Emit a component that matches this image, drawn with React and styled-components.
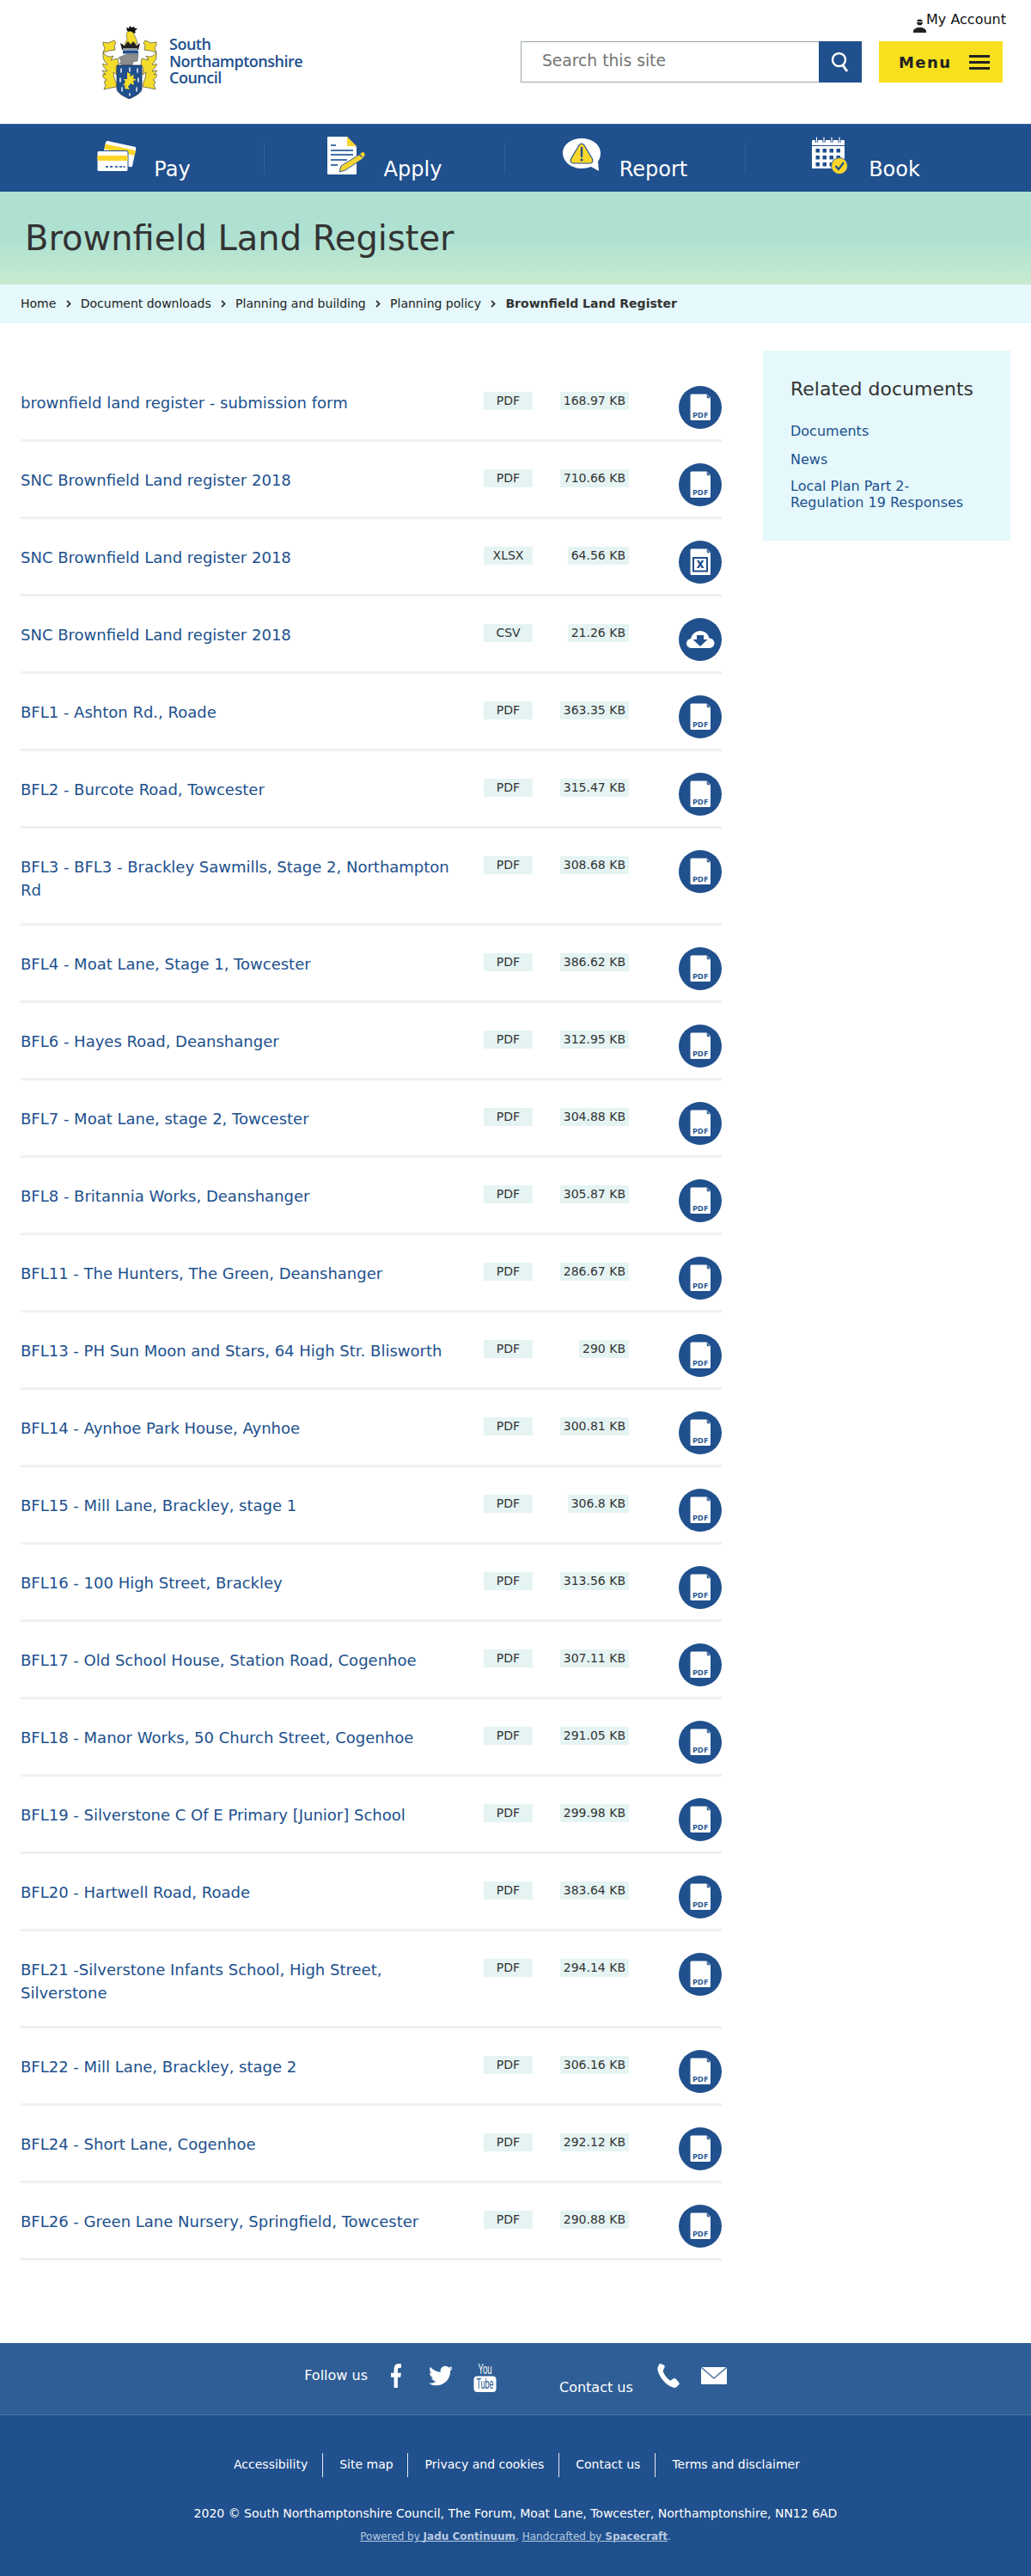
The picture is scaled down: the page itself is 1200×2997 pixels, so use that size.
import styled, { createGlobalStyle } from 'styled-components'
import { FaFacebookF, FaTwitter } from 'react-icons/fa'

const BLUE = '#20508d'

const GlobalStyle = createGlobalStyle`
  html, body {
    margin: 0;
    padding: 0;
    background: #fff;
    font-family: "DejaVu Sans", "Liberation Sans", sans-serif;
    color: #333;
  }
  * { box-sizing: border-box; }
  a { text-decoration: none; color: inherit; }
`

const Page = styled.div`
  width: 1200px;
`

const Header = styled.header`
  height: 144px;
  display: flex;
  justify-content: space-between;
  align-items: flex-start;
  padding: 12px 33px 0 119px;
`

const Logo = styled.a`
  display: flex;
  align-items: center;
  gap: 14px;
  margin-top: 18px;
`

const LogoText = styled.span`
  font-family: "Open Sans", sans-serif;
  font-weight: 600;
  font-size: 18px;
  line-height: 19.5px;
  letter-spacing: -0.5px;
  color: ${BLUE};
  margin-top: -2px;
`

const HeaderRight = styled.div`
  display: flex;
  flex-direction: column;
  align-items: flex-end;
`

const Account = styled.a`
  display: flex;
  height: 36px;
  margin-right: -4px;
  font-size: 16px;
  line-height: 22px;
  color: #111;
  svg { margin-top: 10px; }
`

const SearchRow = styled.div`
  display: flex;
  gap: 20px;
`

const SearchForm = styled.form`
  display: flex;
`

const SearchInput = styled.input`
  width: 347px;
  height: 48px;
  border: 1px solid #9aa9ae;
  border-right: none;
  padding: 0 0 4px 24px;
  font: 18.7px "DejaVu Sans", sans-serif;
  color: #333;
  background: #fff;
  border-radius: 0;
  outline: none;
  &::placeholder { color: #757575; opacity: 1; }
`

const SearchButton = styled.button`
  width: 50px;
  height: 48px;
  border: none;
  padding: 0;
  background: ${BLUE};
  display: flex;
  align-items: center;
  justify-content: center;
`

const MenuButton = styled.button`
  width: 144px;
  height: 48px;
  border: none;
  padding: 0 15px 0 23px;
  background: #f8e01e;
  display: flex;
  align-items: center;
  justify-content: space-between;
  font: bold 18px "DejaVu Sans", sans-serif;
  letter-spacing: 1.4px;
  color: #222;
`

const Burger = styled.span`
  display: flex;
  flex-direction: column;
  gap: 4px;
  width: 24px;
  i {
    display: block;
    height: 3px;
    background: #222;
  }
`

const Nav = styled.nav`
  height: 79px;
  background: ${BLUE};
  border-top: 1px solid #3a6a9f;
  padding: 21px 52px 0 28px;
  display: grid;
  grid-template-columns: repeat(4, 280px);
  align-items: start;
`

const NavItem = styled.a`
  height: 36px;
  display: flex;
  justify-content: center;
  color: #fff;
  border-right: ${p => (p.$last ? 'none' : '1px solid #33639b')};
`

const NavIcon = styled.span`
  width: 44px;
  height: 44px;
  margin: -7px 22px 0 0;
  flex: none;
`

const NavLabel = styled.span`
  margin-top: 17px;
  font-size: 24px;
  line-height: 28px;
`

const Hero = styled.div`
  height: 108px;
  padding: 32px 29px 0;
  background: linear-gradient(#aee1d2 0%, #aee1d2 50%, #c9ebcf 100%);
`

const Title = styled.h1`
  margin: 0;
  font-weight: 400;
  font-size: 40px;
  line-height: 44px;
  color: #333;
`

const Crumbs = styled.div`
  height: 45px;
  padding: 0 24px 1px;
  background: #e5f8fb;
  display: flex;
  align-items: center;
  gap: 11.2px;
  font-size: 14px;
  color: #222;
`

const CrumbCurrent = styled.strong`
  font-weight: 700;
  color: #333;
`

const Main = styled.main`
  display: flex;
  align-items: flex-start;
  gap: 48px;
  padding: 0 24px 96px;
`

const List = styled.div`
  width: 816px;
  margin-top: 48px;
`

const Row = styled.div`
  display: grid;
  grid-template-columns: 539px 57px 112px 58px 50px;
  align-items: start;
  border-bottom: 3px solid #f0f0f0;
`

const RowTitle = styled.a`
  padding: 31px 29px 25px 0;
  font-size: 18px;
  line-height: 27px;
  color: ${BLUE};
`

const Badge = styled.span`
  height: 21px;
  margin-top: 32px;
  line-height: 21px;
  font-size: 14px;
  background: #e5f4f3;
  color: #333;
  white-space: nowrap;
`

const TypeBadge = styled(Badge)`
  text-align: center;
`

const SizeBadge = styled(Badge)`
  justify-self: end;
  padding: 0 4px;
`

const RowIcon = styled.a`
  grid-column: 5;
  margin: 25px 0 12px;
  width: 50px;
  height: 50px;
  display: block;
  svg { display: block; }
`

const Related = styled.aside`
  width: 288px;
  margin-top: 32px;
  padding: 32px 32px 35px;
  background: #e5f8fb;
`

const RelatedHeading = styled.h2`
  margin: 0 0 26px;
  font-weight: 400;
  font-size: 22px;
  line-height: 26px;
  color: #333;
`

const RelatedList = styled.ul`
  margin: 0;
  padding: 0;
  list-style: none;
  display: flex;
  flex-direction: column;
  gap: 14px;
  font-size: 16px;
  line-height: 19px;
  color: ${BLUE};
  li:last-child { margin-top: -2px; }
`

const Footer = styled.footer`
  background: ${BLUE};
  color: #fff;
`

const Social = styled.div`
  height: 84px;
  background: #2f5e96;
  border-bottom: 1px solid #4a75a7;
  padding-bottom: 8px;
  display: flex;
  justify-content: center;
  align-items: center;
  font-size: 16px;
`

const SocialLabel = styled.span`
  line-height: 20px;
  padding-top: ${p => p.$drop || 0}px;
  margin-right: ${p => p.$right || 0}px;
`

const SocialIcon = styled.a`
  display: flex;
  margin-right: ${p => p.$right || 0}px;
  color: #fff;
`

const FacebookGlyph = styled(FaFacebookF)`
  width: 14px;
  height: 28px;
`

const FooterLinks = styled.ul`
  margin: 0;
  padding: 44px 0 0;
  list-style: none;
  display: flex;
  justify-content: center;
  font-size: 14px;
`

const FooterLink = styled.li`
  height: 28px;
  line-height: 27px;
  padding: 0 16.500px 0 19.500px;
  border-right: ${p => (p.$last ? 'none' : '1px solid #e4ebf3')};
`

const Copyright = styled.p`
  margin: 32px 0 0;
  font-size: 14px;
  line-height: 20px;
  text-align: center;
`

const Powered = styled.p`
  margin: 9px 0 0;
  padding-bottom: 38px;
  font-size: 12px;
  line-height: 16px;
  text-align: center;
  color: #b7cae2;
  a { text-decoration: underline; }
`

const rows = [
  ['brownfield land register - submission form', 'PDF', '168.97 KB'],
  ['SNC Brownfield Land register 2018', 'PDF', '710.66 KB'],
  ['SNC Brownfield Land register 2018', 'XLSX', '64.56 KB'],
  ['SNC Brownfield Land register 2018', 'CSV', '21.26 KB'],
  ['BFL1 - Ashton Rd., Roade', 'PDF', '363.35 KB'],
  ['BFL2 - Burcote Road, Towcester', 'PDF', '315.47 KB'],
  ['BFL3 - BFL3 - Brackley Sawmills, Stage 2, Northampton Rd', 'PDF', '308.68 KB'],
  ['BFL4 - Moat Lane, Stage 1, Towcester', 'PDF', '386.62 KB'],
  ['BFL6 - Hayes Road, Deanshanger', 'PDF', '312.95 KB'],
  ['BFL7 - Moat Lane, stage 2, Towcester', 'PDF', '304.88 KB'],
  ['BFL8 - Britannia Works, Deanshanger', 'PDF', '305.87 KB'],
  ['BFL11 - The Hunters, The Green, Deanshanger', 'PDF', '286.67 KB'],
  ['BFL13 - PH Sun Moon and Stars, 64 High Str. Blisworth', 'PDF', '290 KB'],
  ['BFL14 - Aynhoe Park House, Aynhoe', 'PDF', '300.81 KB'],
  ['BFL15 - Mill Lane, Brackley, stage 1', 'PDF', '306.8 KB'],
  ['BFL16 - 100 High Street, Brackley', 'PDF', '313.56 KB'],
  ['BFL17 - Old School House, Station Road, Cogenhoe', 'PDF', '307.11 KB'],
  ['BFL18 - Manor Works, 50 Church Street, Cogenhoe', 'PDF', '291.05 KB'],
  ['BFL19 - Silverstone C Of E Primary [Junior] School', 'PDF', '299.98 KB'],
  ['BFL20 - Hartwell Road, Roade', 'PDF', '383.64 KB'],
  ['BFL21 -Silverstone Infants School, High Street, Silverstone', 'PDF', '294.14 KB'],
  ['BFL22 - Mill Lane, Brackley, stage 2', 'PDF', '306.16 KB'],
  ['BFL24 - Short Lane, Cogenhoe', 'PDF', '292.12 KB'],
  ['BFL26 - Green Lane Nursery, Springfield, Towcester', 'PDF', '290.88 KB'],
]

const Crest = () => {
  const mantle = (
    <g fill="#f4dc2c" stroke="#33332a" strokeWidth="0.6" strokeLinejoin="round">
      <path d="M1 19l6 1 7-3 2 3-2 3 1 5-7 1-7 2 2-5-2-4z" />
      <path d="M1 31c3 5 8 6 12 4l-3 5 8-2 1 7-3 4 1 8-4-3 1 7 2 5 1 5-6 1-9 2 2-5-2-4 3-2c-3-2-5-3-4-7l3 1-4-5 6 1c-3-4-6-6-5-9 2 1 4 2 5 1-3-3-5-6-5-9z" />
    </g>
  )
  return (
    <svg width="64" height="85" viewBox="0 0 64 85" aria-hidden="true">
      {mantle}
      <g transform="translate(64 0) scale(-1 1)">{mantle}</g>
      <path d="M28 2l3 1 1-3 2 2 3-1 1 2 3 0-3 3 1 2-3 1-4-1-3-2z" fill="#111" />
      <path d="M28 9c2-4 6-3 8-1l3 6 2 7H26l3-5z" fill="#f4dc2c" stroke="#33332a" strokeWidth="0.5" />
      <path d="M21 20l5 3 4-5 3 4 3-4 4 5 4-3-2 8H23z" fill="#222" />
      <path d="M24 26h17v3H24z" fill="#8f9da8" />
      <path d="M24 29h18v3.500H24z" fill={BLUE} />
      <path d="M19 37l7-3 3-1 13 0-1 8-5 1-2 6-7 2-2-4-5-2 2-3z" fill="#8c8c8c" stroke="#55555a" strokeWidth="0.5" />
      <path d="M17 46h29v27c0 5-8 9-14.500 12C25 82 17 78 17 73z" fill={BLUE} stroke="#1b2b44" strokeWidth="0.8" />
      <g stroke="#e9eef4" strokeWidth="1.6" strokeLinecap="round" fill="none">
        <path d="M22 50v4M32 49v4M41 50v4M21 61v4M42 61v4M23 72v4M40 72v4M32 79v2" />
      </g>
      <path d="M29 54l4 2-1 3 5-2-1 4 4 2-4 1 1 5-4-2-3 4 2 3-6-1 1-4-3 1 3-5-2-3 4 0z" fill="#f4dc2c" />
    </svg>
  )
}

const PayIcon = () => (
  <svg width="46" height="44" viewBox="0 0 46 44" aria-hidden="true">
    <g transform="translate(-1 0)">
      <g transform="rotate(12 26 18)">
        <rect x="9" y="8" width="36" height="24" rx="2" fill="#fff" />
        <rect x="9" y="12" width="36" height="6" fill="#fcd72a" />
      </g>
      <rect x="1" y="16.500" width="36" height="24" rx="2" fill="#fff" stroke={BLUE} strokeWidth="1" />
      <rect x="1.500" y="22" width="35" height="6" fill="#fcd72a" />
      <path d="M11 35h3M16 35h3M22 35h3M27 35h3M31.500 35h2" stroke="#4472a8" strokeWidth="1.800" />
    </g>
  </svg>
)

const ApplyIcon = () => (
  <svg width="44" height="44" viewBox="0 0 44 44" aria-hidden="true">
    <path d="M1 0h22l11 12v31a1 1 0 0 1-1 1H1a1 1 0 0 1-1-1V1a1 1 0 0 1 1-1z" fill="#fff" />
    <path d="M23 0l11 11H23z" fill="#f4d52e" />
    <path d="M4 10h6M4 16h26M4 21h26M4 27h19M4 33h8" stroke="#4472a8" strokeWidth="1.800" />
    <path d="M14 41l2-7 21-13 5 4-21 14z" fill="#f4d52e" stroke="#2f5e96" strokeWidth="1" strokeLinejoin="round" />
    <path d="M38 20l3-2c2 0 3 2 2.500 4l-2 2.500z" fill="#f4d52e" />
  </svg>
)

const ReportIcon = () => (
  <svg width="44" height="44" viewBox="0 0 44 44" aria-hidden="true">
    <path d="M22 2c12 0 22 7 22 17 0 4-1 7-3 10l1 11-9-5c-3 1-7 2-11 2C10 37 0 29 0 19 0 9 10 2 22 2z" fill="#fff" />
    <path d="M22 8c1 0 2 1 3 2l9 15c2 3 1 6-3 6H13c-4 0-5-3-3-6l9-15c1-1 2-2 3-2z" fill="#fcd72a" stroke={BLUE} strokeWidth="1.200" />
    <path d="M22 13v10" stroke={BLUE} strokeWidth="2.400" strokeLinecap="round" />
    <circle cx="22" cy="27" r="1.600" fill={BLUE} />
  </svg>
)

const BookIcon = () => (
  <svg width="44" height="44" viewBox="0 0 44 44" aria-hidden="true">
    <path d="M1 4h36a1 1 0 0 1 1 1v31a1 1 0 0 1-1 1H1a1 1 0 0 1-1-1V5a1 1 0 0 1 1-1z" fill="#fff" />
    <path d="M0 10.500h38" stroke={BLUE} strokeWidth="1.200" />
    <path d="M5.500 1v6M14 1v6M23 1v6M32 1v6" stroke={BLUE} strokeWidth="3.200" />
    <path d="M5.500 1v6M14 1v6M23 1v6M32 1v6" stroke="#fff" strokeWidth="1.200" strokeLinecap="round" />
    <g fill={BLUE}>
      {[4.500, 12.500, 20.500, 28.500].flatMap(x => [14, 22, 30].map(y => <rect key={`${x}-${y}`} x={x} y={y} width="4.500" height="4.500" />))}
    </g>
    <circle cx="32" cy="34" r="9.500" fill="#fcd72a" stroke="#2f5e96" strokeWidth="1" />
    <path d="M27.500 34l3.500 4 6-8" fill="none" stroke={BLUE} strokeWidth="2.200" />
  </svg>
)

const FileShape = () => (
  <>
    <path d="M15 9.500h17.500L37 14v24.500a1.500 1.500 0 0 1-1.500 1.500H15a1.500 1.500 0 0 1-1.500-1.500V11a1.500 1.500 0 0 1 1.500-1.500z" fill="#fff" />
    <path d="M32.500 10L36.500 14.500 33 14z" fill={BLUE} />
  </>
)

const FileIcon = ({ type }) => (
  <svg width="50" height="50" viewBox="0 0 50 50" aria-hidden="true">
    <circle cx="25" cy="25" r="25" fill={BLUE} />
    {type === 'PDF' && (
      <>
        <FileShape />
        <text x="25" y="37" textAnchor="middle" fontFamily="'Open Sans', sans-serif" fontWeight="700" fontSize="9.500" fill={BLUE}>
          PDF
        </text>
      </>
    )}
    {type === 'XLSX' && (
      <>
        <FileShape />
        <rect x="17" y="20" width="16" height="15.500" fill="none" stroke={BLUE} strokeWidth="2" />
        <text x="25" y="32" textAnchor="middle" fontFamily="'Open Sans', sans-serif" fontWeight="800" fontSize="12" fill={BLUE}>
          X
        </text>
      </>
    )}
    {type === 'CSV' && (
      <>
        <path d="M15 35c-3.500 0-6-2.500-6-5.500 0-3 2-5 5-5.500 1-5 5.500-9 11-9 5 0 9.500 3.500 10.500 8.500 3.500 0 6 2.800 6 5.800 0 3.200-2.500 5.700-6 5.700z" fill="#fff" />
        <path d="M21 20h8v5h4.500L25 33l-8.500-8H21z" fill={BLUE} />
      </>
    )}
  </svg>
)

const Chevron = () => (
  <svg width="6" height="9" viewBox="0 0 6 9" aria-hidden="true">
    <path d="M1 .8l3.600 3.700L1 8.200" fill="none" stroke="#333" strokeWidth="1.800" />
  </svg>
)

const YoutubeIcon = () => (
  <svg width="27" height="38" viewBox="0 -6 27 38" aria-hidden="true">
    <text transform="translate(13.500 11) scale(0.8 1.3)" textAnchor="middle" fontFamily="'Liberation Sans', sans-serif" fontSize="12" fill="#fff">
      You
    </text>
    <rect x="0.500" y="13.500" width="26" height="18.500" rx="4" fill="#fff" />
    <text transform="translate(13.500 28) scale(0.75 1.4)" textAnchor="middle" fontFamily="'Liberation Sans', sans-serif" fontSize="12" fill={BLUE}>
      Tube
    </text>
  </svg>
)

const PhoneIcon = () => (
  <svg width="30" height="28" viewBox="0 0 30 28" fill="#fff" aria-hidden="true">
    <path d="M5 0l3.500 1.500c1 .5 1.500 1.500 1 2.500L8 7.500c-.4.8-.3 1.500 0 2.200 1.500 3.300 4 6.700 7 9.300.6.500 1.400.6 2 .2l3-2c.8-.5 1.800-.4 2.500.3l3.800 4.500c.6.800.5 1.800-.2 2.500l-2.600 2.500c-1 .9-2.300 1.200-3.600.8C11 25 3.500 16 1.500 7.500 1 6 1.500 4 2.500 2.500L3.300.6C3.700 0 4.400-.2 5 0z" />
  </svg>
)

const MailIcon = () => (
  <svg width="30" height="20" viewBox="0 0 30 20" aria-hidden="true">
    <rect width="30" height="20" rx="1.500" fill="#fff" />
    <path d="M.5.500L15 13 29.500.500" fill="none" stroke="#2f5e96" strokeWidth="1.200" />
  </svg>
)

const navItems = [
  ['Pay', PayIcon],
  ['Apply', ApplyIcon],
  ['Report', ReportIcon],
  ['Book', BookIcon],
]

const footerLinks = ['Accessibility', 'Site map', 'Privacy and cookies', 'Contact us', 'Terms and disclaimer']

export default function App() {
  return (
    <Page>
      <GlobalStyle />
      <Header>
        <Logo href="#">
          <Crest />
          <LogoText>
            South
            <br />
            Northamptonshire
            <br />
            Council
          </LogoText>
        </Logo>
        <HeaderRight>
          <Account href="#">
            <svg width="15" height="16" viewBox="0 0 15 16" aria-hidden="true">
              <circle cx="7.500" cy="4" r="3.400" fill="#222" />
              <path d="M0 16v-2c0-2 2.500-3 5-4h5c2.500 1 5 2 5 4v2z" fill="#222" />
              <path d="M4 3.500h7" stroke="#fff" strokeWidth="0.800" />
            </svg>
            My Account
          </Account>
          <SearchRow>
            <SearchForm>
              <SearchInput placeholder="Search this site" />
              <SearchButton type="button" aria-label="Search">
                <svg width="22" height="24" viewBox="0 0 22 24" aria-hidden="true">
                  <circle cx="9.500" cy="9.500" r="7.500" fill="none" stroke="#fff" strokeWidth="2.400" />
                  <path d="M14 16l5 7" stroke="#fff" strokeWidth="3" />
                </svg>
              </SearchButton>
            </SearchForm>
            <MenuButton type="button">
              Menu
              <Burger>
                <i />
                <i />
                <i />
              </Burger>
            </MenuButton>
          </SearchRow>
        </HeaderRight>
      </Header>

      <Nav>
        {navItems.map(([label, Icon], index) => (
          <NavItem key={label} href="#" $last={index === navItems.length - 1}>
            <NavIcon>
              <Icon />
            </NavIcon>
            <NavLabel>{label}</NavLabel>
          </NavItem>
        ))}
      </Nav>

      <Hero>
        <Title>Brownfield Land Register</Title>
      </Hero>

      <Crumbs>
        <a href="#">Home</a>
        <Chevron />
        <a href="#">Document downloads</a>
        <Chevron />
        <a href="#">Planning and building</a>
        <Chevron />
        <a href="#">Planning policy</a>
        <Chevron />
        <CrumbCurrent>Brownfield Land Register</CrumbCurrent>
      </Crumbs>

      <Main>
        <List>
          {rows.map(([title, type, size], index) => (
            <Row key={`row-${index}`}>
              <RowTitle href="#">{title}</RowTitle>
              <TypeBadge>{type}</TypeBadge>
              <SizeBadge>{size}</SizeBadge>
              <RowIcon href="#" aria-label={`Download ${title}`}>
                <FileIcon type={type} />
              </RowIcon>
            </Row>
          ))}
        </List>
        <Related>
          <RelatedHeading>Related documents</RelatedHeading>
          <RelatedList>
            <li><a href="#">Documents</a></li>
            <li><a href="#">News</a></li>
            <li><a href="#">Local Plan Part 2- Regulation 19 Responses</a></li>
          </RelatedList>
        </Related>
      </Main>

      <Footer>
        <Social>
          <SocialLabel $right={26}>Follow us</SocialLabel>
          <SocialIcon href="#" $right={31} aria-label="Facebook">
            <FacebookGlyph preserveAspectRatio="none" />
          </SocialIcon>
          <SocialIcon href="#" $right={24} aria-label="Twitter">
            <FaTwitter size={28} />
          </SocialIcon>
          <SocialIcon href="#" $right={73} aria-label="YouTube">
            <YoutubeIcon />
          </SocialIcon>
          <SocialLabel $drop={28} $right={27}>Contact us</SocialLabel>
          <SocialIcon href="#" $right={22} aria-label="Telephone">
            <PhoneIcon />
          </SocialIcon>
          <SocialIcon href="#" aria-label="Email">
            <MailIcon />
          </SocialIcon>
        </Social>
        <FooterLinks>
          {footerLinks.map((link, index) => (
            <FooterLink key={link} $last={index === footerLinks.length - 1}>
              <a href="#">{link}</a>
            </FooterLink>
          ))}
        </FooterLinks>
        <Copyright>2020 © South Northamptonshire Council, The Forum, Moat Lane, Towcester, Northamptonshire, NN12 6AD</Copyright>
        <Powered>
          <a href="#">Powered by <b>Jadu Continuum</b></a>, <a href="#">Handcrafted by <b>Spacecraft</b></a>.
        </Powered>
      </Footer>
    </Page>
  )
}
